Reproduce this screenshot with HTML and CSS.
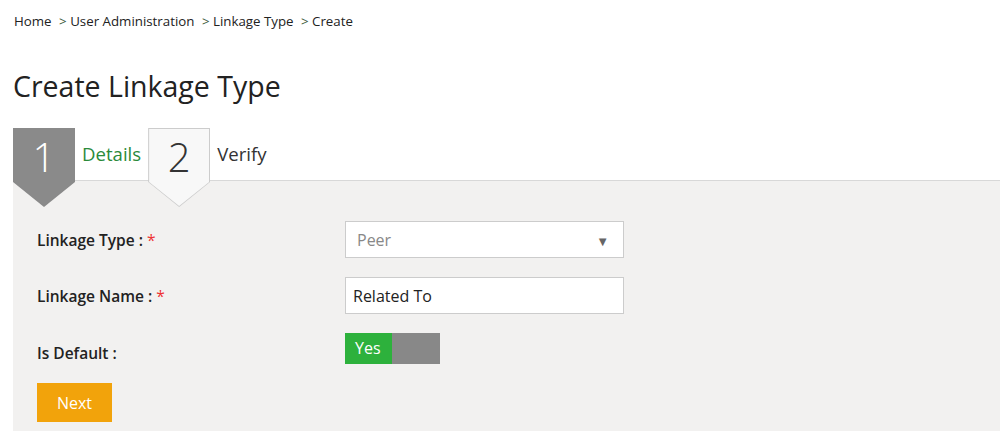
FILE: index.html
```html
<!DOCTYPE html>
<html lang="en">
<head>
    <meta charset="UTF-8">
    <meta name="viewport" content="width=device-width, initial-scale=1.0">
    <title>Create Linkage Type</title>
    <link rel="stylesheet" href="styles.css">
</head>
<body>
    <div class="breadcrumb">
        <a href="#">Home</a>
        <span class="sep">&gt;</span> <a href="#">User Administration</a>
        <span class="sep">&gt;</span> <a href="#">Linkage Type</a>
        <span class="sep">&gt;</span> <span>Create</span>
    </div>

    <h1>Create Linkage Type</h1>

    <div class="wizard">
        <div class="step active">
            <div class="badge"><div class="face">1</div></div>
            <span class="step-label">Details</span>
        </div>
        <div class="step">
            <div class="badge"><div class="face">2</div></div>
            <span class="step-label">Verify</span>
        </div>
    </div>

    <div class="panel">
        <div class="form-grid">
            <label>Linkage Type : <span class="req">*</span></label>
            <div class="select">
                <span>Peer</span>
                <span class="arrow">&#9660;</span>
            </div>

            <label>Linkage Name : <span class="req">*</span></label>
            <input type="text" class="text-input" value="Related To">

            <label>Is Default :</label>
            <div class="toggle">
                <span class="toggle-on">Yes</span>
                <span class="toggle-off"></span>
            </div>
        </div>
        <button class="btn-next">Next</button>
    </div>
</body>
</html>
```

FILE: styles.css
```css
body {
    margin: 0;
    font-family: 'Open Sans', 'Noto Sans', sans-serif;
    color: #222;
    background: #fff;
}
.breadcrumb {
    padding: 12px 0 0 14px;
    font-size: 13.3px;
    line-height: 18px;
}
.breadcrumb a {
    color: #222;
    text-decoration: none;
}
.breadcrumb .sep {
    color: #3a5a3a;
    margin-left: 4px;
}
h1 {
    margin: 0;
    padding: 38px 0 0 13px;
    font-size: 28.5px;
    font-weight: 400;
    line-height: 36px;
}
.wizard {
    display: flex;
    gap: 7px;
    margin: 24px 0 0 13px;
    height: 52px;
    position: relative;
    z-index: 1;
}
.step {
    display: flex;
    gap: 7px;
}
.badge {
    width: 62px;
    height: 79px;
    padding: 1px;
    box-sizing: border-box;
    background: #ccc;
    clip-path: polygon(0 0, 100% 0, 100% 54px, 50% 100%, 0 54px);
}
.face {
    height: 100%;
    background: #f8f8f8;
    clip-path: polygon(0 0, 100% 0, 100% 53px, 50% 100%, 0 53px);
    text-align: center;
    font-size: 40px;
    line-height: 56px;
    font-weight: 300;
    color: #333;
}
.step.active .badge,
.step.active .face {
    background: #8a8a8a;
}
.step.active .face {
    color: #fff;
}
.step-label {
    font-size: 18.6px;
    line-height: 52px;
    color: #333;
}
.step.active .step-label {
    color: #2a8a3a;
}
.panel {
    margin-left: 13px;
    background: #f2f1f0;
    border-top: 1px solid #d8d8d8;
    padding: 40px 24px 9px;
}
.form-grid {
    display: grid;
    grid-template-columns: 308px 279px;
    grid-template-rows: 37px 37px 31px;
    row-gap: 19px;
}
.form-grid label {
    font-size: 15.5px;
    font-weight: 600;
    line-height: 20px;
    padding-top: 9px;
}
.form-grid label:nth-of-type(3) {
    padding-top: 10px;
}
.req {
    color: #e33;
    font-weight: 400;
}
.select,
.text-input {
    box-sizing: border-box;
    height: 37px;
    border: 1px solid #ccc;
    background: #fff;
    font-family: inherit;
    font-size: 16px;
}
.select {
    display: flex;
    justify-content: space-between;
    align-items: center;
    padding: 0 14px 0 11px;
    color: #888;
}
.select .arrow {
    font-size: 13px;
    color: #666;
    margin-top: 3px;
}
.text-input {
    width: 279px;
    padding: 0 7px;
    color: #222;
    outline: none;
}
.toggle {
    display: flex;
    width: 95px;
    height: 31px;
}
.toggle-on {
    width: 47px;
    background: #2db13c;
    color: #fff;
    font-size: 16px;
    line-height: 31px;
    padding-left: 10px;
    box-sizing: border-box;
}
.toggle-off {
    flex: 1;
    background: #888;
}
.btn-next {
    display: block;
    margin-top: 19px;
    width: 75px;
    height: 39px;
    border: none;
    background: #f2a30b;
    color: #fff;
    font-family: inherit;
    font-size: 16px;
    cursor: pointer;
}
```
